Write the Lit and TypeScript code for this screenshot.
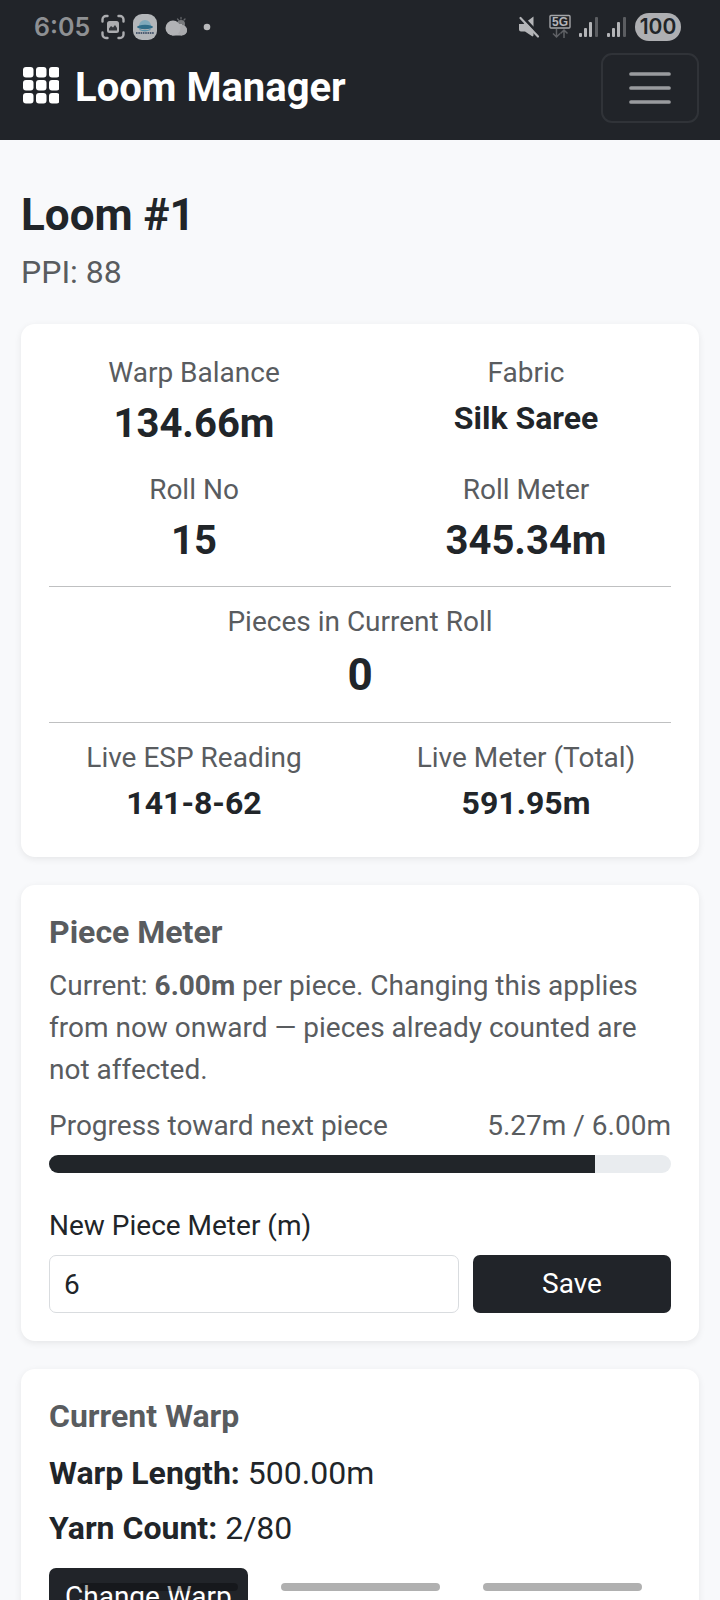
import { LitElement, html, css, svg } from "lit";
import { customElement, property, state } from "lit/decorators.js";

const SIGNAL = html`<svg width="20" height="24" viewBox="0 0 20 24" aria-hidden="true">
  <rect x="0" y="18" width="3" height="4" rx="1" fill="#b4b5b8" />
  <rect x="5" y="13" width="3" height="9" rx="1" fill="#b4b5b8" />
  <rect x="10" y="7" width="3" height="15" rx="1" fill="#b4b5b8" />
  <rect x="16" y="2" width="3" height="20" rx="1" fill="#5b5d61" />
</svg>`;

@customElement("status-bar")
export class StatusBar extends LitElement {
  static styles = css`
    :host {
      display: flex;
      align-items: center;
      justify-content: space-between;
      height: 53px;
      padding: 0 39px 0 34px;
      box-sizing: border-box;
    }
    .group {
      display: flex;
      align-items: center;
      gap: 8px;
    }
    svg {
      display: block;
    }
    .time {
      margin-right: 3px;
      font: 600 25px/28px Inter, Roboto, sans-serif;
      color: #8e9093;
    }
    .battery {
      width: 46px;
      height: 28px;
      border-radius: 14px;
      background: #aeafb2;
      color: #212529;
      font: 600 21px/28px Inter, Roboto, sans-serif;
      text-align: center;
    }
    .net {
      font: 700 12px "Liberation Sans", sans-serif;
    }
  `;

  render() {
    return html`
      <div class="group">
        <span class="time">6:05</span>
        <svg width="24" height="26" viewBox="0 0 24 26" aria-hidden="true">
          <g fill="none" stroke="#acadb0" stroke-width="2.4" stroke-linecap="round">
            <path d="M1.500 7.500V5.500a3.500 3.500 0 0 1 3.500-3.500H6.500M17.500 2H19a3.500 3.500 0 0 1 3.500 3.500V7.500M22.500 18.500v2a3.500 3.500 0 0 1-3.500 3.500H17.500M6.500 24H5a3.500 3.500 0 0 1-3.500-3.500V18.500" />
          </g>
          <rect x="6" y="7" width="12" height="12" rx="2.500" fill="#acadb0" />
          <path d="M8 16.500v-2l2-2.500 2 1.500 2-2.500 2 3v2.500z" fill="#33363b" />
        </svg>
        <svg width="24" height="26" viewBox="0 0 24 26" aria-hidden="true">
          <rect width="24" height="26" rx="9" fill="#b3b6b9" />
          <path d="M6 12a6 6 0 0 1 12 0z" fill="#7fa9bb" />
          <ellipse cx="12" cy="13" rx="8" ry="2.200" fill="#2f6c88" />
          <path d="M6.500 15.500q5.500 2.500 11 0" fill="none" stroke="#5c93aa" stroke-width="1.300" />
          <path d="M3 19h18" stroke="#4c5b70" stroke-width="2" stroke-dasharray="1.600 .7" />
        </svg>
        <svg width="22" height="26" viewBox="0 0 22 26" aria-hidden="true">
          <g stroke="#66686c" stroke-width="1.300" stroke-linecap="round">
            <path d="M16 3.500v1.500M12.500 5l1 1M20 5l-1 1" />
          </g>
          <circle cx="16" cy="10" r="4" fill="#77797c" />
          <circle cx="17" cy="16" r="5" fill="#a5a6a9" />
          <rect x="7" y="10" width="10" height="11.500" fill="#b0b1b4" />
          <circle cx="17" cy="16.500" r="5" fill="#a9aaad" />
          <circle cx="8" cy="14" r="7.500" fill="#b2b3b6" />
        </svg>
        <svg width="16" height="26" viewBox="0 0 16 26" aria-hidden="true">
          <circle cx="12" cy="13" r="3.300" fill="#b8b9bb" />
        </svg>
      </div>
      <div class="group">
        <svg width="24" height="26" viewBox="0 0 24 26" aria-hidden="true">
          <path d="M2 10h4.500L16.500 2.500V21.500L15.500 22.500 8 17.500H4q-2 0-2-2z" fill="#b4b5b8" />
          <path d="M4 1.500L23 21.500" stroke="#212429" stroke-width="3" />
          <path d="M3.500 4L21 22.500" stroke="#b4b5b8" stroke-width="2.200" stroke-linecap="round" />
        </svg>
        <svg width="22" height="26" viewBox="0 0 22 26" aria-hidden="true">
          <rect x="1" y="1.500" width="20" height="12.500" rx="1" fill="none" stroke="#a4a5a8" stroke-width="1.400" />
          <text class="net" x="11" y="12.200" text-anchor="middle" fill="#b4b5b8">5G</text>
          <g fill="none" stroke="#5f6165" stroke-width="1.500">
            <path d="M7.500 15v8M4 19.500l3.500 3.500 3.500-3.500M15 24v-8M11.500 19.500L15 16l3.500 3.500" />
          </g>
        </svg>
        ${SIGNAL}${SIGNAL}
        <span class="battery">100</span>
      </div>
    `;
  }
}

@customElement("loom-stat")
export class LoomStat extends LitElement {
  @property() label = "";
  @property() value = "";
  @property() size = "md";

  static styles = css`
    :host {
      display: flex;
      flex-direction: column;
      gap: 5px;
      text-align: center;
    }
    .label {
      font-size: 28px;
      line-height: 42px;
      color: #595c5f;
    }
    .value {
      font-weight: 700;
      color: #212529;
    }
    .md {
      font-size: 32px;
      line-height: 38px;
    }
    .lg {
      font-size: 40px;
      line-height: 50px;
    }
    .xl {
      font-size: 44px;
      line-height: 54px;
    }
  `;

  render() {
    return html`
      <span class="label">${this.label}</span>
      <span class="value ${this.size}">${this.value}</span>
    `;
  }
}

@customElement("app-root")
export class AppRoot extends LitElement {
  @state() private pieceMeter = 6;
  private progress = 5.27;

  static styles = css`
    :host {
      display: flex;
      flex-direction: column;
      height: 100vh;
      background: #f8f9fb;
      color: #212529;
      font-family: Roboto, sans-serif;
      font-size: 28px;
      line-height: 42px;
    }
    h1,
    h2,
    p {
      margin: 0;
    }
    .header {
      flex: none;
      background: #212429;
    }
    .navbar {
      display: flex;
      align-items: center;
      justify-content: space-between;
      padding: 0 21px 17px;
    }
    .brand {
      display: flex;
      align-items: center;
      gap: 16px;
      color: #fff;
      font-size: 40px;
      font-weight: 700;
      line-height: 48px;
      text-decoration: none;
    }
    .brand svg {
      display: block;
      margin-bottom: 6px;
    }
    .toggler {
      display: grid;
      place-items: center;
      width: 98px;
      height: 70px;
      padding: 0;
      border: 2px solid #303338;
      border-radius: 11px;
      background: none;
    }
    .content {
      flex: 1;
      min-height: 0;
      overflow-y: auto;
      scrollbar-width: none;
      display: flex;
      flex-direction: column;
      gap: 28px;
      padding: 49px 21px 28px;
    }
    .content > * {
      flex: none;
    }
    .heading {
      display: flex;
      flex-direction: column;
      gap: 7px;
    }
    .page-title {
      font-size: 44px;
      font-weight: 700;
      line-height: 52px;
    }
    .ppi {
      font-size: 32px;
      line-height: 48px;
      color: #595c5f;
    }
    .card {
      padding: 28px;
      border-radius: 14px;
      background: #fff;
      box-shadow: 0 2px 7px rgba(0, 0, 0, 0.08);
    }
    .stats {
      display: grid;
      grid-template-columns: 1fr 1fr;
      gap: 20px 42px;
    }
    .rule {
      height: 0;
      margin: 20px 0 14px;
      border: 0;
      border-top: 1px solid #bfc0c1;
    }
    .live {
      padding-bottom: 7px;
    }
    .card-title {
      margin-bottom: 14px;
      font-size: 32px;
      font-weight: 700;
      line-height: 38px;
      color: #595c5f;
    }
    .muted {
      color: #595c5f;
    }
    .progress-row {
      display: flex;
      justify-content: space-between;
      margin: 14px 0 8px;
    }
    .track {
      height: 18px;
      border-radius: 9px;
      overflow: hidden;
      background: #e9ecef;
    }
    .fill {
      height: 100%;
      background: #212529;
    }
    .form {
      display: grid;
      grid-template-columns: repeat(3, 1fr);
      gap: 8px 14px;
      margin-top: 32px;
    }
    .form label {
      grid-column: 1 / -1;
    }
    .form input {
      grid-column: span 2;
      min-width: 0;
      height: 58px;
      box-sizing: border-box;
      padding: 0 14px;
      border: 1px solid #d9dcdf;
      border-radius: 7px;
      background: #fff;
      color: #212529;
      font: inherit;
      appearance: textfield;
    }
    .btn {
      height: 58px;
      padding: 0 16px;
      border: 0;
      border-radius: 7px;
      background: #212429;
      color: #fff;
      font: inherit;
      white-space: nowrap;
    }
    .facts {
      display: flex;
      flex-direction: column;
      gap: 7px;
      margin-bottom: 16px;
      font-size: 32px;
      line-height: 48px;
    }
    .gesture {
      position: fixed;
      inset: auto 0 9px;
      display: flex;
      justify-content: center;
      gap: 43px;
      pointer-events: none;
    }
    .gesture span {
      width: 159px;
      height: 8px;
      border-radius: 4px;
      background: rgba(0, 0, 0, 0.31);
    }
  `;

  private save(e: Event) {
    e.preventDefault();
    const form = e.target as HTMLFormElement;
    this.pieceMeter = Number(new FormData(form).get("meter")) || this.pieceMeter;
  }

  render() {
    const total = this.pieceMeter.toFixed(2);
    const percent = (this.progress / this.pieceMeter) * 100;
    return html`
      <header class="header">
        <status-bar></status-bar>
        <nav class="navbar">
          <a class="brand" href="#">
            <svg width="38" height="38" viewBox="0 0 38 38" fill="#fff" aria-hidden="true">
              ${[1, 14, 27].map((y) =>
                [2, 15, 28].map((x) => svg`<rect x=${x} y=${y} width="10.500" height="10.500" rx="3" />`)
              )}
            </svg>
            Loom Manager
          </a>
          <button class="toggler" aria-label="Toggle navigation">
            <svg width="52" height="52" viewBox="0 0 52 52" aria-hidden="true">
              <path d="M7 12h38M7 26h38M7 40h38" stroke="#999b9e" stroke-width="3.700" stroke-linecap="round" />
            </svg>
          </button>
        </nav>
      </header>

      <main class="content">
        <div class="heading">
          <h1 class="page-title">Loom #1</h1>
          <p class="ppi">PPI: 88</p>
        </div>

        <section class="card">
          <div class="stats">
            <loom-stat label="Warp Balance" value="134.66m" size="lg"></loom-stat>
            <loom-stat label="Fabric" value="Silk Saree"></loom-stat>
            <loom-stat label="Roll No" value="15" size="lg"></loom-stat>
            <loom-stat label="Roll Meter" value="345.34m" size="lg"></loom-stat>
          </div>
          <hr class="rule" />
          <loom-stat label="Pieces in Current Roll" value="0" size="xl"></loom-stat>
          <hr class="rule" />
          <div class="stats live">
            <loom-stat label="Live ESP Reading" value="141-8-62"></loom-stat>
            <loom-stat label="Live Meter (Total)" value="591.95m"></loom-stat>
          </div>
        </section>

        <section class="card">
          <h2 class="card-title">Piece Meter</h2>
          <p class="muted">
            Current: <b>${total}m</b> per piece. Changing this applies from now onward — pieces
            already counted are not affected.
          </p>
          <div class="progress-row muted">
            <span>Progress toward next piece</span>
            <span>${this.progress}m / ${total}m</span>
          </div>
          <div class="track" role="progressbar" aria-label="Progress toward next piece" aria-valuenow=${Math.round(percent)}>
            <div class="fill" style="width:${percent}%"></div>
          </div>
          <form class="form" @submit=${this.save}>
            <label for="meter">New Piece Meter (m)</label>
            <input id="meter" name="meter" type="number" step="0.01" value="6" />
            <button class="btn" type="submit">Save</button>
          </form>
        </section>

        <section class="card">
          <h2 class="card-title">Current Warp</h2>
          <div class="facts">
            <p><b>Warp Length:</b> 500.00m</p>
            <p><b>Yarn Count:</b> 2/80</p>
          </div>
          <button class="btn" type="button">Change Warp</button>
        </section>
      </main>

      <div class="gesture" aria-hidden="true"><span></span><span></span><span></span></div>
    `;
  }
}
